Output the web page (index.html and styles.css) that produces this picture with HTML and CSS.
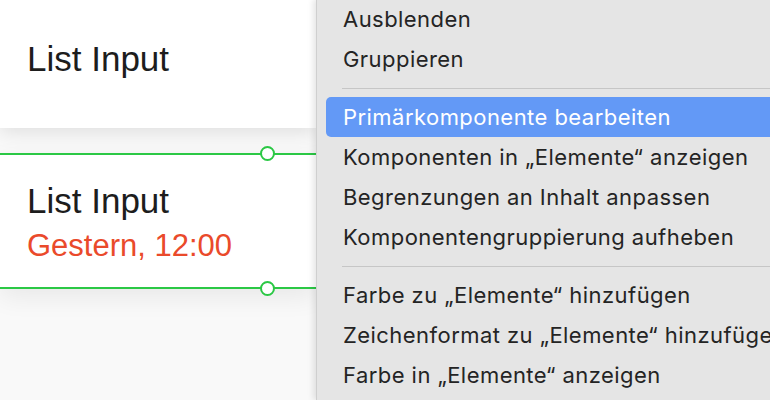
FILE: index.html
```html
<!DOCTYPE html>
<html lang="de">
<head>
<meta charset="utf-8">
<title>Kontextmenü</title>
<link rel="stylesheet" href="styles.css">
</head>
<body>
<div class="screen">
  <section class="canvas">
    <div class="card card-top">
      <div class="title">List Input</div>
    </div>
    <div class="card card-selected">
      <div class="title">List Input</div>
      <div class="subtitle">Gestern, 12:00</div>
      <span class="handle handle-top"></span>
      <span class="handle handle-bottom"></span>
    </div>
  </section>
  <nav class="menu">
    <div class="item">Ausblenden</div>
    <div class="item">Gruppieren</div>
    <div class="sep"></div>
    <div class="item active">Primärkomponente bearbeiten</div>
    <div class="item">Komponenten in „Elemente“ anzeigen</div>
    <div class="item">Begrenzungen an Inhalt anpassen</div>
    <div class="item">Komponentengruppierung aufheben</div>
    <div class="sep"></div>
    <div class="item">Farbe zu „Elemente“ hinzufügen</div>
    <div class="item">Zeichenformat zu „Elemente“ hinzufügen</div>
    <div class="item">Farbe in „Elemente“ anzeigen</div>
  </nav>
</div>
</body>
</html>
```
FILE: styles.css
```css
* { box-sizing: border-box; }
html, body { margin: 0; padding: 0; }
body {
  width: 770px;
  height: 400px;
  overflow: hidden;
  background: #f7f7f7;
}
.screen {
  display: flex;
  width: 770px;
  height: 400px;
}
.canvas {
  width: 316px;
  flex: none;
  display: flex;
  flex-direction: column;
  background: #f9f9f9;
  font-family: "Liberation Sans", Arial, sans-serif;
}
.card {
  background: #fff;
  position: relative;
  padding-left: 27px;
}
.card-top {
  height: 128px;
  padding-top: 39px;
  box-shadow: 0 4px 18px rgba(0,0,0,0.11);
  z-index: 1;
}
.card-selected {
  margin-top: 25px;
  height: 136px;
  border-top: 2px solid #2bc845;
  border-bottom: 2px solid #2bc845;
  padding-top: 26px;
  box-shadow: 0 8px 24px rgba(0,0,0,0.07);
}
.title {
  font-size: 35px;
  line-height: 40px;
  color: #1d1d1d;
}
.subtitle {
  margin-top: 7px;
  font-size: 31px;
  line-height: 36px;
  color: #ea4a2b;
}
.handle {
  position: absolute;
  left: 260px;
  width: 15px;
  height: 15px;
  border-radius: 50%;
  border: 2px solid #2bc845;
  background: #fff;
}
.handle-top { top: -9px; }
.handle-bottom { bottom: -9px; }
.menu {
  flex: 1;
  background: #e5e5e5;
  border-left: 1px solid #cfcfcf;
  box-shadow: -3px 0 6px rgba(0,0,0,0.10);
  position: relative;
  z-index: 2;
  padding: 0 0 0 9px;
  margin-top: -1px;
  font-family: Inter, "Noto Sans", sans-serif;
  font-size: 22px;
  letter-spacing: 0.45px;
  color: #242424;
  white-space: nowrap;
  overflow: hidden;
}
.item {
  height: 40px;
  line-height: 40px;
  padding-left: 17px;
  border-radius: 5px 0 0 5px;
}
.item.active {
  background: #6399f6;
  color: #fff;
}
.sep {
  height: 18px;
  display: flex;
  align-items: center;
  margin-left: 16px;
}
.sep::before {
  content: "";
  flex: 1;
  height: 1px;
  background: #c6c6c6;
}
```
